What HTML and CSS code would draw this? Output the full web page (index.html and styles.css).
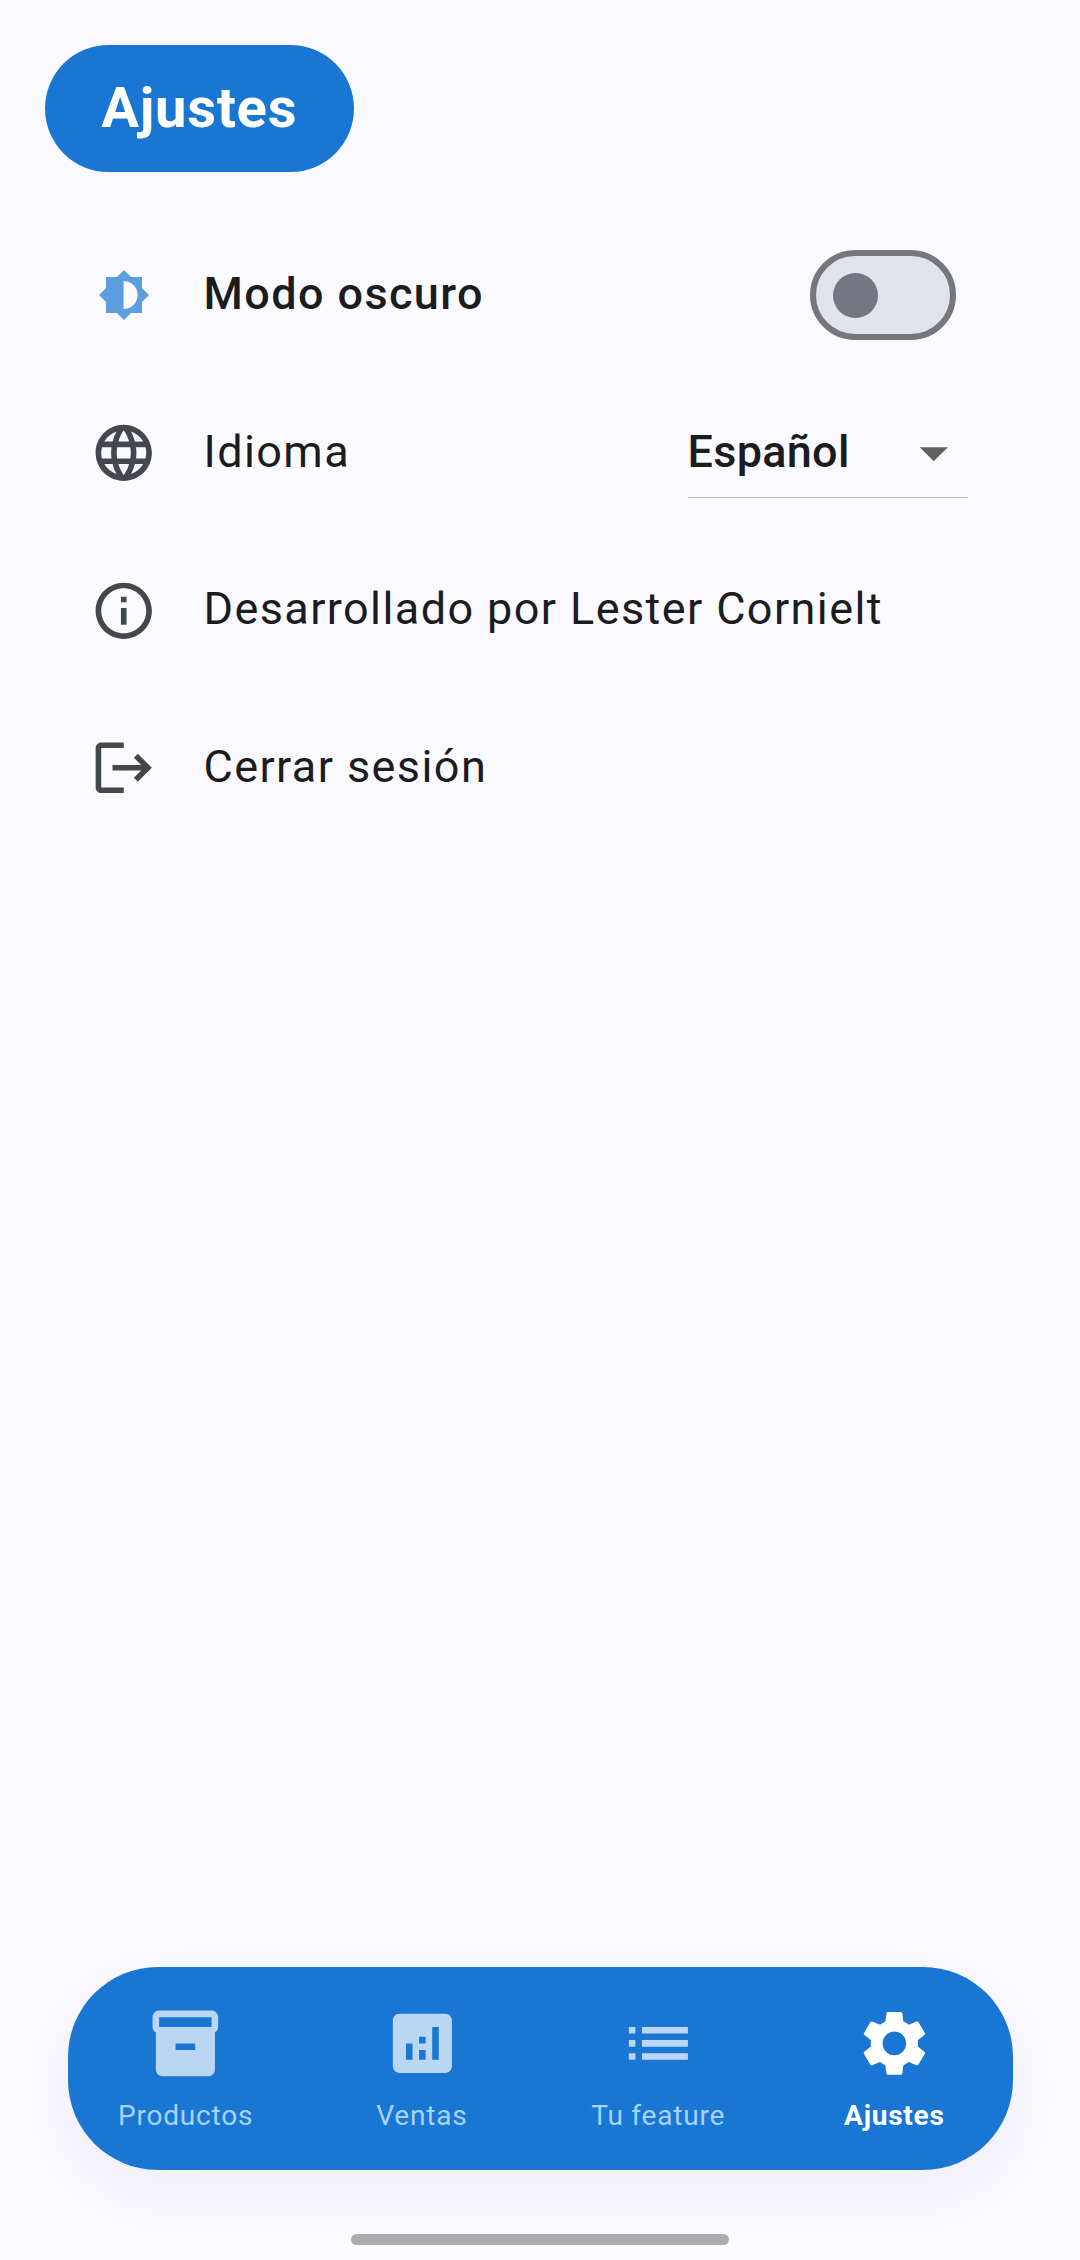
FILE: index.html
```html
<!DOCTYPE html>
<html lang="es">
<head>
<meta charset="utf-8">
<title>Ajustes</title>
<link rel="stylesheet" href="styles.css">
</head>
<body>
<div class="screen">
  <header class="header">
    <h1 class="title">Ajustes</h1>
  </header>

  <main class="settings">
    <div class="row">
      <span class="lead"><svg class="brightness" viewBox="-27 -27 54 54"><path fill-rule="evenodd" d="M0-25L7-18H18V-7L25 0L18 7V18H7L0 25L-7 18H-18V7L-25 0L-18-7V-18H-7ZM-.4-14V14A14 14 0 0 0-.4-14Z"/></svg></span>
      <span class="label label-strong">Modo oscuro</span>
      <button class="switch" type="button" role="switch" aria-checked="false" aria-label="Modo oscuro"><span class="thumb"></span></button>
    </div>
    <div class="row">
      <span class="lead"><svg class="icon" viewBox="0 0 24 24"><path d="M11.99 2C6.47 2 2 6.48 2 12s4.47 10 9.99 10C17.52 22 22 17.52 22 12S17.52 2 11.99 2zm6.93 6h-2.95c-.32-1.25-.78-2.45-1.38-3.56 1.84.63 3.37 1.91 4.33 3.56zM12 4.04c.83 1.2 1.48 2.53 1.91 3.96h-3.82c.43-1.43 1.08-2.76 1.91-3.96zM4.26 14C4.1 13.36 4 12.69 4 12s.1-1.36.26-2h3.38c-.08.66-.14 1.32-.14 2s.06 1.34.14 2H4.26zm.82 2h2.95c.32 1.25.78 2.45 1.38 3.56-1.84-.63-3.37-1.9-4.33-3.56zm2.95-8H5.08c.96-1.66 2.49-2.93 4.33-3.56C8.81 5.55 8.35 6.75 8.03 8zM12 19.96c-.83-1.2-1.48-2.53-1.91-3.96h3.82c-.43 1.43-1.08 2.76-1.91 3.96zM14.34 14H9.66c-.09-.66-.16-1.32-.16-2s.07-1.35.16-2h4.68c.09.65.16 1.32.16 2s-.07 1.34-.16 2zm.25 5.56c.6-1.11 1.06-2.31 1.38-3.56h2.95c-.96 1.65-2.49 2.93-4.33 3.56zM16.36 14c.08-.66.14-1.32.14-2s-.06-1.34-.14-2h3.38c.16.64.26 1.31.26 2s-.1 1.36-.26 2h-3.38z"/></svg></span>
      <span class="label">Idioma</span>
      <div class="dropdown">
        <span class="dropdown-value">Español</span>
        <svg class="icon arrow" viewBox="0 0 24 24"><path d="M7 10l5 5 5-5z"/></svg>
      </div>
    </div>
    <div class="row">
      <span class="lead"><svg class="icon" viewBox="0 0 24 24"><path d="M11 7h2v2h-2zm0 4h2v6h-2zm1-9C6.48 2 2 6.48 2 12s4.48 10 10 10 10-4.48 10-10S17.52 2 12 2zm0 18c-4.41 0-8-3.59-8-8s3.59-8 8-8 8 3.59 8 8-3.59 8-8 8z"/></svg></span>
      <span class="label">Desarrollado por Lester Cornielt</span>
    </div>
    <div class="row">
      <span class="lead"><svg class="icon" viewBox="0 0 24 24"><path d="M17 7l-1.41 1.41L18.17 11H8v2h10.17l-2.58 2.58L17 17l5-5zM4 5h8V3H4c-1.1 0-2 .9-2 2v14c0 1.1.9 2 2 2h8v-2H4V5z"/></svg></span>
      <span class="label">Cerrar sesión</span>
    </div>
  </main>

  <nav class="nav">
    <a class="tab">
      <svg class="tab-icon" viewBox="0 0 24 24"><path d="M20 2H4c-1 0-2 .9-2 2v3.01c0 .72.43 1.34 1 1.69V20c0 1.1 1.1 2 2 2h14c.9 0 2-.9 2-2V8.7c.57-.35 1-.97 1-1.69V4c0-1.1-1-2-2-2zm-5 12H9v-2h6v2zm5-7H4V4h16v3z"/></svg>
      <span class="tab-label">Productos</span>
    </a>
    <a class="tab">
      <svg class="tab-icon" viewBox="0 0 24 24"><path d="M19 3H5c-1.1 0-2 .9-2 2v14c0 1.1.9 2 2 2h14c1.1 0 2-.9 2-2V5c0-1.1-.9-2-2-2zM9 17H7v-5h2v5zm4 0h-2v-3h2v3zm0-5h-2v-2h2v2zm4 5h-2V7h2v10z"/></svg>
      <span class="tab-label">Ventas</span>
    </a>
    <a class="tab">
      <svg class="tab-icon" viewBox="0 0 24 24"><path d="M3 13h2v-2H3v2zm0 4h2v-2H3v2zm0-8h2V7H3v2zm4 4h14v-2H7v2zm0 4h14v-2H7v2zM7 7v2h14V7H7z"/></svg>
      <span class="tab-label">Tu feature</span>
    </a>
    <a class="tab tab-active">
      <svg class="tab-icon" viewBox="0 0 24 24"><path d="M19.14 12.94c.04-.3.06-.61.06-.94 0-.32-.02-.64-.07-.94l2.03-1.58c.18-.14.23-.41.12-.61l-1.92-3.32c-.12-.22-.37-.29-.59-.22l-2.39.96c-.5-.38-1.03-.7-1.62-.94l-.36-2.54c-.04-.24-.24-.41-.48-.41h-3.84c-.24 0-.43.17-.47.41l-.36 2.54c-.59.24-1.13.57-1.62.94l-2.39-.96c-.22-.08-.47 0-.59.22L2.74 8.87c-.12.21-.08.47.12.61l2.03 1.58c-.05.3-.09.63-.09.94s.02.64.07.94l-2.03 1.58c-.18.14-.23.41-.12.61l1.92 3.32c.12.22.37.29.59.22l2.39-.96c.5.38 1.03.7 1.62.94l.36 2.54c.05.24.24.41.48.41h3.84c.24 0 .44-.17.47-.41l.36-2.54c.59-.24 1.13-.56 1.62-.94l2.39.96c.22.08.47 0 .59-.22l1.92-3.32c.12-.22.07-.47-.12-.61l-2.01-1.58zM12 15.6c-1.98 0-3.6-1.62-3.6-3.6s1.62-3.6 3.6-3.6 3.6 1.62 3.6 3.6-1.62 3.6-3.6 3.6z"/></svg>
      <span class="tab-label">Ajustes</span>
    </a>
  </nav>
  <div class="home-indicator"></div>
</div>
</body>
</html>
```
FILE: styles.css
```css
* {
  box-sizing: border-box;
}

body {
  margin: 0;
  background: #faf9ff;
  color: #1a1c20;
  font-family: Roboto, sans-serif;
}

.screen {
  display: flex;
  flex-direction: column;
  height: 2260px;
  padding: 45px 0 15px;
}

.header {
  display: flex;
  padding-left: 45px;
}

.title {
  margin: 0;
  padding: 0 56.25px;
  border-radius: 64px;
  background: #1976d2;
  color: #fff;
  font-size: 56.25px;
  font-weight: 700;
  line-height: 126.5px;
  letter-spacing: 0.7px;
}

.settings {
  flex: 1;
  padding: 45px 112.5px 0 90px;
}

.row {
  display: flex;
  align-items: center;
  height: 157.5px;
}

.lead {
  display: flex;
  align-items: center;
  justify-content: center;
  width: 67.5px;
  height: 67.5px;
  margin-right: 46px;
}

.icon {
  width: 67.5px;
  height: 67.5px;
  fill: #43474e;
}

.brightness {
  width: 54px;
  height: 54px;
  fill: #5c9ee0;
}

.label {
  flex: 1;
  padding-bottom: 3px;
  font-size: 45px;
  line-height: 67.5px;
  letter-spacing: 1.4px;
  white-space: nowrap;
}

.label-strong {
  font-weight: 500;
}

.switch {
  display: flex;
  align-items: center;
  width: 146px;
  height: 90px;
  margin: 0 11.5px 0 0;
  padding: 0 0 0 16.5px;
  border: 6px solid #74777f;
  border-radius: 45px;
  background: #e1e2ea;
}

.thumb {
  width: 45px;
  height: 45px;
  border-radius: 50%;
  background: #74777f;
}

.dropdown {
  display: flex;
  align-items: center;
  justify-content: space-between;
  width: 280px;
  height: 90px;
  border-bottom: 1px solid #bdbdbd;
}

.dropdown-value {
  padding-bottom: 2px;
  font-size: 45px;
  font-weight: 500;
  letter-spacing: 0.28px;
}

.arrow {
  fill: #616161;
}

.nav {
  display: flex;
  height: 203px;
  margin: 0 67.5px 64px;
  border-radius: 90px;
  background: #1976d2;
  box-shadow: 0 22px 60px rgba(0, 0, 0, 0.05);
}

.tab {
  flex: 1;
  display: flex;
  flex-direction: column;
  align-items: center;
  padding-top: 37px;
  color: #a6d3f9;
}

.tab-icon {
  width: 78.75px;
  height: 78.75px;
  fill: #bad6f2;
}

.tab-label {
  margin-top: 12px;
  font-size: 28.1px;
  line-height: 42px;
  letter-spacing: 0.75px;
}

.tab-active {
  color: #fff;
  font-weight: 700;
}

.tab-active .tab-icon {
  fill: #fff;
}

.home-indicator {
  align-self: center;
  width: 378px;
  height: 11px;
  border-radius: 6px;
  background: #acabb0;
}
```
